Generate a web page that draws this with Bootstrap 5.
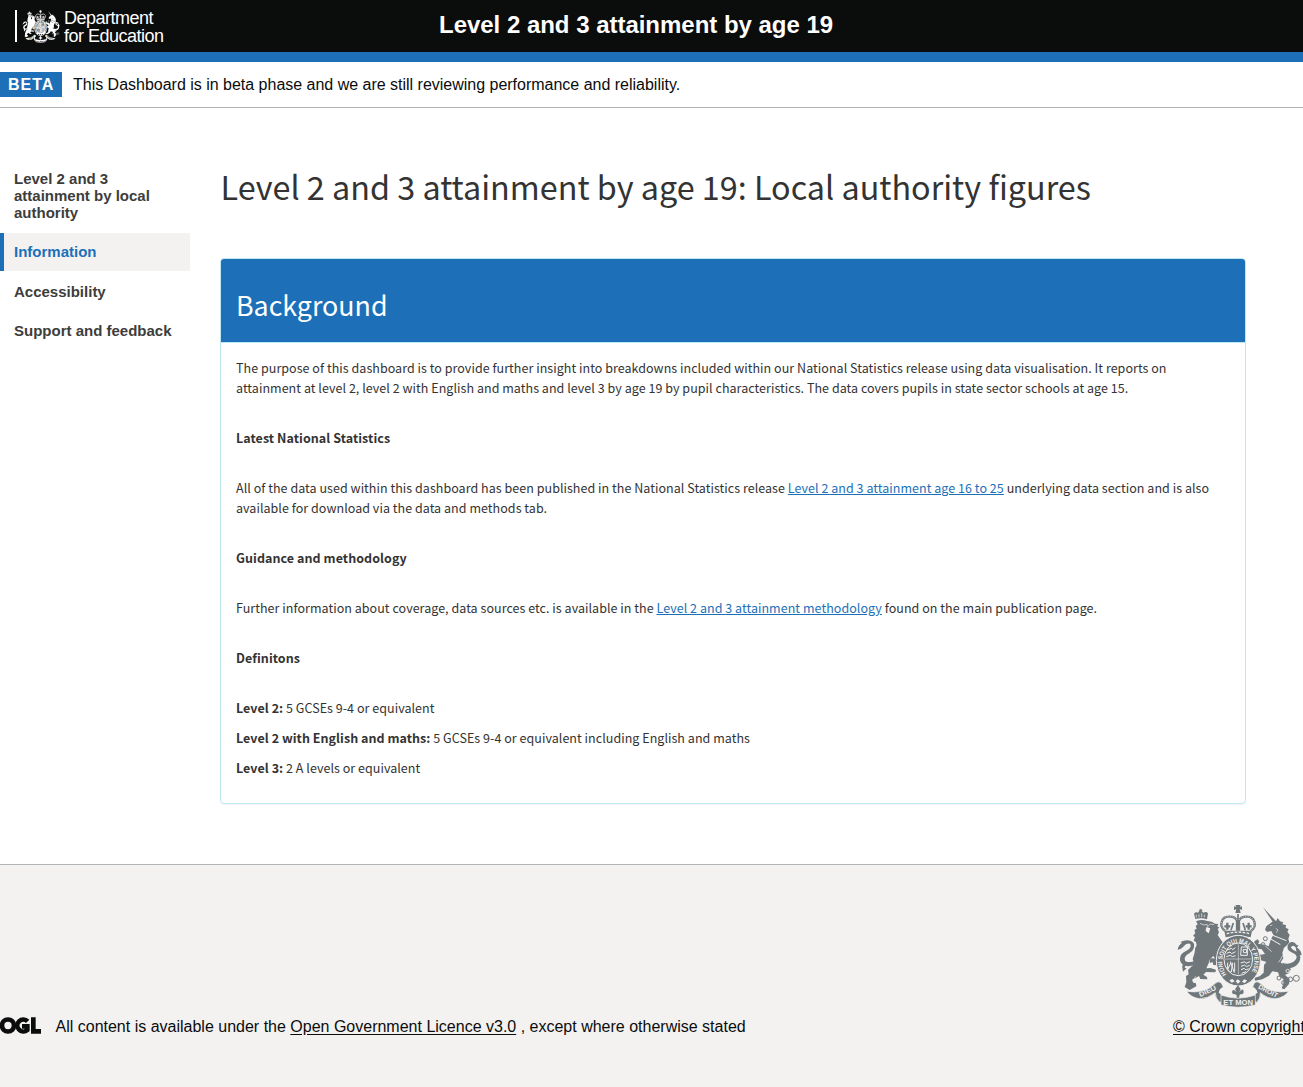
<!DOCTYPE html>
<html lang="en">
<head>
<meta charset="utf-8">
<meta name="viewport" content="width=device-width, initial-scale=1">
<title>Level 2 and 3 attainment by age 19</title>
<link href="https://cdn.jsdelivr.net/npm/bootstrap@5.3.0/dist/css/bootstrap.min.css" rel="stylesheet">
<style>
:root { --dfe-blue: #1d70b8; --ink: #0b0c0c; --pale: #f3f2f1; --rule: #b1b4b6; }
body { font-family: "Liberation Sans", Arial, sans-serif; font-size: 16px; line-height: 20px; color: var(--ink); overflow-x: hidden; }
.site-header { height: 62px; background: var(--ink); border-bottom: 10px solid var(--dfe-blue); color: #fff; }
.dept-logo { padding-left: 15px; width: 439px; }
.dept-bar { width: 2px; height: 32px; background: #fff; margin-right: 5px; }
.dept-name { font-size: 18px; line-height: 18px; letter-spacing: -.5px; margin-left: 4px; padding-top: 1px; }
.service-name { font-size: 24px; line-height: 50px; font-weight: 700; letter-spacing: -.02px; }
.phase { height: 46px; padding-top: 10px; border-bottom: 1px solid var(--rule); }
.phase-tag { background: var(--dfe-blue); color: #fff; font-weight: 700; width: 62px; height: 25px; line-height: 25px; padding-left: 8px; letter-spacing: 1px; margin-right: 11px; }
.phase-text { line-height: 25px; letter-spacing: -.01px; }
.page-body { padding-top: 58px; height: 756px; }
.side-menu { width: 190px; margin-right: 30px; }
.side-menu .nav-link { color: #3d3d3c; font-weight: 700; font-size: 15px; line-height: 17px; padding: 10px 10px 12px 14px; border-radius: 0; }
.side-menu .nav-link:first-child { padding-top: 4px; padding-bottom: 12px; }
.side-menu .nav-link.active { color: var(--dfe-blue); background: var(--pale); border-left: 4px solid var(--dfe-blue); padding-left: 10px; padding-bottom: 11px; margin-bottom: 2px; }
.src-text { font-family: "Noto Sans CJK SC", "Noto Sans", sans-serif; color: #333; }
.main-col { width: 1026px; }
.page-title { font-size: 32.35px; line-height: 50px; font-weight: 400; margin: -5px 0 47px; padding-left: .6px; }
.info-panel { border: 1px solid #bce8f1; border-radius: 4px; height: 546px; box-shadow: 0 1px 1px rgba(0,0,0,.05); overflow: hidden; }
.info-head { background: var(--dfe-blue); border-bottom: 1px solid #bce8f1; height: 84px; padding: 21px 15px 0; }
.info-head h2 { color: #fff; font-size: 26.8px; line-height: 50px; font-weight: 400; margin: 0; }
.info-body { padding: 15px; font-size: 12.5px; line-height: 20px; letter-spacing: .04px; }
.info-body p { margin: 0 0 10px; }
.info-body h3 { font-size: 12.5px; line-height: 20px; font-weight: 700; margin: 30px 0; letter-spacing: .06px; }
.info-body a { color: var(--dfe-blue); }
.info-body .one { white-space: nowrap; }
.site-footer { background: var(--pale); border-top: 1px solid var(--rule); height: 223px; padding-top: 39px; }
.site-footer a { color: var(--ink); text-underline-offset: 2px; }
.licence { padding-top: 113px; }
.ogl { margin-right: 14.5px; }
.crown { width: 130px; white-space: nowrap; }
.crown svg { margin-left: 3px; }
.crown a { margin-top: 9px; }
</style>
</head>
<body>
<svg width="0" height="0" class="position-absolute" aria-hidden="true">
  <symbol id="arms" viewBox="48 27 381 312" preserveAspectRatio="none">
    <g fill="currentColor" stroke="none">
      <!-- lion -->
      <path d="M106 72L102 56Q107 50 114 53L119 46L116 45L122 42L128 45L125 48L130 53Q139 48 144 55L141 73Q124 67 106 72Z"/>
      <path d="M108 79Q124 72 142 78L155 80L165 86L175 87L172 94L178 98L173 102L177 112L173 120L181 132L188 142L184 152L178 162L187 176L184 194L174 194L169 203L180 205L177 211L160 210L158 202L166 192L160 183L150 193L145 207L139 220L151 219L168 224L166 232L138 231L130 239L141 246L142 253L121 252L117 243L108 248L96 254L100 263L108 265L109 274L89 285L74 276L79 262L78 243L86 238L84 225L93 216L103 206L98 192L103 176L106 158L110 151L108 141L101 137L105 126L99 123L106 114L103 105L110 101L107 93L113 88Z"/>
      <path d="M102 210C78 220 55 207 61 185C65 168 92 167 92 153C92 144 83 143 72 153C66 161 62 162 53 164Q55 151 66 144L61 141Q76 134 91 137Q105 141 102 156C99 176 74 176 74 192C75 204 91 203 107 197Z"/>
      <path d="M69 204l10 3l-5 11l6 2l-11 10q-5-14 0-26ZM151 190l34 1l-1 10l-15 7l-7-8l-13 4Z"/>
      <!-- unicorn -->
      <path d="M309 37L348 79L341 85Z"/>
      <path d="M319 94L337 80L349 77L353 69L360 79L370 82L367 88L378 90L377 98L386 103L382 110L389 120L385 131L388 142L381 151L372 158L367 174L370 190L362 202L373 214L393 221L387 234L375 240L389 252L387 267L373 283L365 280L370 266L370 252L359 245L354 232L337 229L327 242L307 253L285 257L284 248L299 244L311 233L312 210L319 201L301 195L302 186L288 180L284 171L293 170L302 179L315 177L305 163L286 160L280 150L284 138L293 133L298 140L294 146L314 149L326 154L332 135L340 119L334 108L321 111L315 104Z"/>
      <path d="M367 203C388 212 407 200 410 187C411 173 388 174 383 161C380 146 393 137 404 143L411 151L416 151L411 158C422 164 425 175 425 181C411 179 408 169 407 157Q398 147 393 157C396 169 420 167 421 187C421 213 389 228 367 215Z"/>
      <!-- crown -->
      <path d="M229 36L226 30H242L239 36L246 34V45L239 42L242 54H226L229 43L222 45V34Z"/>
      <path d="M193 107H276L272 127Q234 117 197 127Z"/>
    </g>
    <g fill="none" stroke="currentColor">
      <path d="M196 108C175 94 184 65 206 65Q227 64 231 78V107M272 108C294 94 284 65 262 65Q241 64 237 78V107" stroke-width="7"/>
      <path d="M234 57V106M220 84l-7 22M249 84l7 22" stroke-width="5"/>
      <path d="M202 83v21M193 94h18M266 83v21M257 94h18" stroke-width="7"/>
    </g>
    <g stroke="var(--cut)" fill="none">
      <path d="M196 108C175 94 184 65 206 65Q227 64 232 78M272 108C294 94 284 65 262 65Q241 64 236 78" stroke-width="2" stroke-dasharray="3 4"/>
      <path d="M200 116Q235 107 269 116" stroke-width="4" stroke-dasharray="8 4"/>
      <path d="M109 68V59M117 67V58M125 67V55M133 67V59" stroke-width="2"/>
      <path d="M120 85l12 5l9-2l2 7l8-8l11 2M107 244l-8 12" stroke-width="2"/>
      <path d="M330 92l7-2M347 100l7 5l-5 8M316 153l19 17M369 181l-13 21" stroke-width="2"/>
      <path d="M322 126L361 149M328 117L379 137" stroke-width="3"/>
    </g>
    <path fill="var(--cut)" d="M139 96l12 4l-5 15l-9-7z"/>
    <!-- chain and collar -->
    <g fill="none" stroke="currentColor" stroke-width="3">
      <circle cx="316" cy="131" r="6"/><circle cx="309" cy="149" r="6"/><circle cx="357" cy="249" r="6"/><circle cx="371" cy="263" r="6"/><circle cx="391" cy="253" r="7"/><circle cx="409" cy="250" r="9"/>
    </g>
    <g fill="none" stroke="var(--cut)" stroke-width="2.500"><circle cx="378" cy="185" r="5"/><circle cx="383" cy="228" r="5"/></g>
    <!-- garter and quartered shield -->
    <ellipse cx="235" cy="197" rx="66" ry="76" fill="currentColor" stroke="var(--cut)" stroke-width="3"/>
    <ellipse cx="235" cy="193" rx="43" ry="49" fill="currentColor" stroke="var(--cut)" stroke-width="3"/>
    <g fill="none" stroke="var(--cut)" stroke-width="3">
      <path d="M201 165l14-5l3 4l8-6M200 175l10-4l5 5l12-6M199 185l12-4l6 4l10-3M244 156h18v25h-20zM249 164h11v9h-9zM203 203v20l10 10M211 200l12 33M213 203l-10 20M218 203l-4 28M224 203v27M242 204l12-4l4 5l12-5M243 214l11-4l5 5l10-4M243 224l10-4l5 5l8-4M245 235l13-5"/>
    </g>
    <path d="M235 148V239M194 192H276" stroke="currentColor" stroke-width="7"/>
    <path d="M235 148V239M194 192H276" stroke="var(--cut)" stroke-width="1.5"/>
    <path id="garter-arc" d="M200 238A48 56 0 1 1 270 238" fill="none"/>
    <text fill="var(--cut)" font-family="Liberation Sans, Arial, sans-serif" font-size="19" font-weight="700"><textPath href="#garter-arc" textLength="236" lengthAdjust="spacingAndGlyphs">HONI SOIT QUI MAL Y PENSE</textPath></text>
    <path d="M208 256l9-4l7 7l-9 4zM233 253l8 6l-7 7l-7-7zM252 253l9 3l-6 8l-9-3z" fill="var(--cut)"/>
    <!-- motto ribbon -->
    <g fill="currentColor" stroke="var(--cut)" stroke-width="2">
      <path d="M80 289Q133 298 166 265Q174 256 184 264L190 276Q178 281 178 292Q187 303 190 310L181 323Q165 310 166 293Q144 311 119 311Q94 309 80 289Z"/>
      <path d="M386 289Q333 298 301 265Q291 256 283 264L278 276Q290 281 290 292Q282 303 278 310L289 323Q303 310 301 293Q321 311 347 311Q372 309 386 289Z"/>
      <path d="M183 300Q234 319 286 300V330Q234 343 183 330Z"/>
    </g>
    <path d="M180 285Q191 290 192 302Q185 294 176 293ZM289 285Q279 290 278 302Q286 294 293 293Z" fill="var(--cut)"/>
    <path d="M234 270l8 13l-5 9q13-16 14-1q0 8-8 6l-5 4v7h-8v-7l-6-4q-8 2-8-6q2-13 14 1l-5-9z" fill="currentColor"/>
    <g fill="var(--cut)" font-family="Liberation Sans, Arial, sans-serif" font-size="20" font-weight="700">
      <text transform="translate(121 306) rotate(-25)" textLength="54" lengthAdjust="spacingAndGlyphs">DIEU</text>
      <text x="190" y="329" textLength="89" lengthAdjust="spacingAndGlyphs">ET MON</text>
      <text transform="translate(293 280) rotate(27)" textLength="63" lengthAdjust="spacingAndGlyphs">DROIT</text>
    </g>
  </symbol>
</svg>

<header class="site-header d-flex">
  <div class="dept-logo d-flex align-items-center flex-shrink-0">
    <div class="dept-bar"></div>
    <svg width="38" height="33" style="--cut:#0b0c0c" role="img" aria-label="Royal arms"><use href="#arms"/></svg>
    <div class="dept-name">Department<br>for Education</div>
  </div>
  <div class="service-name">Level 2 and 3 attainment by age 19</div>
</header>

<div class="phase d-flex align-items-start">
  <strong class="phase-tag">BETA</strong>
  <span class="phase-text">This Dashboard is in beta phase and we are still reviewing performance and reliability.</span>
</div>

<div class="page-body d-flex">
  <nav class="side-menu nav flex-column flex-shrink-0 flex-nowrap">
    <a class="nav-link" href="#">Level 2 and 3 attainment by local authority</a>
    <a class="nav-link active" href="#">Information</a>
    <a class="nav-link" href="#">Accessibility</a>
    <a class="nav-link" href="#">Support and feedback</a>
  </nav>
  <main class="main-col src-text flex-shrink-0">
    <h1 class="page-title text-nowrap">Level 2 and 3 attainment by age 19: Local authority figures</h1>
    <section class="info-panel">
      <div class="info-head"><h2>Background</h2></div>
      <div class="info-body">
        <p class="one">The purpose of this dashboard is to provide further insight into breakdowns included within our National Statistics release using data visualisation. It reports on<br>attainment at level 2, level 2 with English and maths and level 3 by age 19 by pupil characteristics. The data covers pupils in state sector schools at age 15.</p>
        <h3>Latest National Statistics</h3>
        <p class="one">All of the data used within this dashboard has been published in the National Statistics release <a href="#">Level 2 and 3 attainment age 16 to 25</a> underlying data section and is also<br>available for download via the data and methods tab.</p>
        <h3>Guidance and methodology</h3>
        <p>Further information about coverage, data sources etc. is available in the <a href="#">Level 2 and 3 attainment methodology</a> found on the main publication page.</p>
        <h3>Definitons</h3>
        <p><b>Level 2:</b> 5 GCSEs 9-4 or equivalent</p>
        <p><b>Level 2 with English and maths:</b> 5 GCSEs 9-4 or equivalent including English and maths</p>
        <p><b>Level 3:</b> 2 A levels or equivalent</p>
      </div>
    </section>
  </main>
</div>

<footer class="site-footer d-flex justify-content-between">
  <div class="licence d-flex align-items-start">
    <svg class="ogl" width="41" height="17" viewBox="0 0 123 51" role="img" aria-label="OGL">
      <g fill="none" stroke="#0b0c0c" stroke-width="14">
        <circle cx="24" cy="25.500" r="18"/>
        <path d="M83 13A18 18 0 1 0 82 39V28H66M100 1V43H123"/>
      </g>
    </svg>
    <span>All content is available under the <a href="#">Open Government Licence v3.0</a> , except where otherwise stated</span>
  </div>
  <div class="crown flex-shrink-0">
    <svg class="d-block" width="127" height="104" style="color:#6f777b;--cut:#f3f2f1" role="img" aria-label="Royal arms"><use href="#arms"/></svg>
    <a class="d-block" href="#">© Crown copyright</a>
  </div>
</footer>
<script src="https://cdn.jsdelivr.net/npm/bootstrap@5.3.0/dist/js/bootstrap.bundle.min.js"></script>
</body>
</html>
